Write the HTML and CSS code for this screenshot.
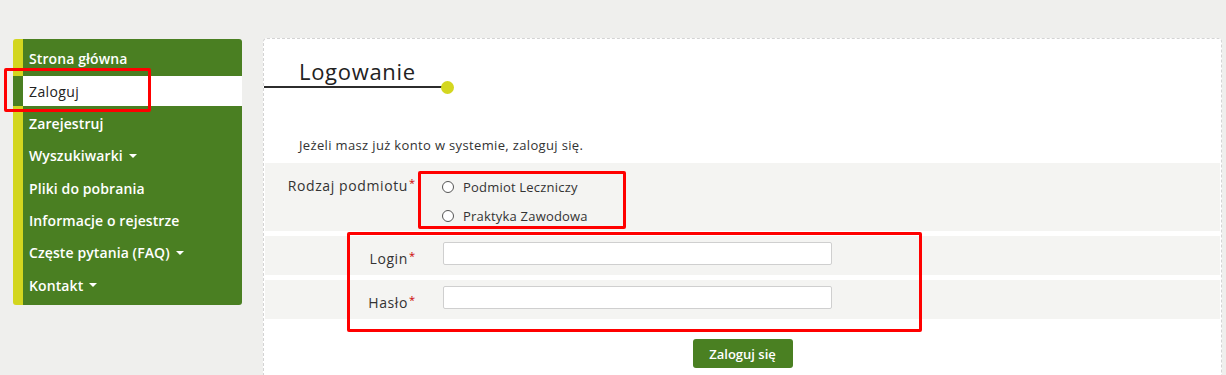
FILE: index.html
```html
<!DOCTYPE html>
<html lang="pl">
<head>
<meta charset="utf-8">
<title>Logowanie</title>
<link rel="stylesheet" href="styles.css">
</head>
<body>
<div class="page">
  <nav class="sidebar">
    <ul class="menu">
      <li><a href="#">Strona główna</a></li>
      <li class="active"><a href="#">Zaloguj</a></li>
      <li><a href="#">Zarejestruj</a></li>
      <li><a href="#">Wyszukiwarki <span class="caret"></span></a></li>
      <li><a href="#">Pliki do pobrania</a></li>
      <li><a href="#">Informacje o rejestrze</a></li>
      <li><a href="#">Częste pytania (FAQ) <span class="caret"></span></a></li>
      <li><a href="#">Kontakt <span class="caret"></span></a></li>
    </ul>
  </nav>
  <main class="panel">
    <div class="title"><h1>Logowanie</h1></div>
    <p class="intro">Jeżeli masz już konto w systemie, zaloguj się.</p>
    <form class="form">
      <div class="row row-radio">
        <div class="lbl">Rodzaj podmiotu<span class="req">*</span></div>
        <div class="radios">
          <label class="radio"><span class="circle"></span>Podmiot Leczniczy</label>
          <label class="radio"><span class="circle"></span>Praktyka Zawodowa</label>
        </div>
      </div>
      <div class="row row-input">
        <div class="lbl">Login<span class="req">*</span></div>
        <input class="field" type="text">
      </div>
      <div class="row row-input">
        <div class="lbl">Hasło<span class="req">*</span></div>
        <input class="field" type="password">
      </div>
      <div class="actions"><button type="button" class="btn">Zaloguj się</button></div>
    </form>
  </main>
  <div class="mark mark-menu"></div>
  <div class="mark mark-radio"></div>
  <div class="mark mark-login"></div>
</div>
</body>
</html>
```

FILE: styles.css
```css
* { box-sizing: border-box; }
html, body { margin: 0; padding: 0; }
body {
  background: #efefed;
  font-family: "Open Sans", "DejaVu Sans", sans-serif;
  color: #333;
  height: 375px;
  overflow: hidden;
}
.page {
  position: relative;
  display: flex;
  align-items: flex-start;
  gap: 21px;
  padding: 39px 4px 0 13px;
}
.sidebar {
  width: 229px;
  flex: none;
  background: #4a7f22;
  border-left: 10px solid #d3d61f;
  border-radius: 3px;
  padding: 3px 0 4px;
}
.menu { list-style: none; margin: 0; padding: 0; }
.menu li { padding: 1.2px 0; }
.menu a {
  display: flex;
  align-items: center;
  height: 30px;
  padding-left: 6px;
  padding-top: 1px;
  color: #fff;
  font-size: 14px;
  font-weight: 600;
  text-decoration: none;
  letter-spacing: 0.1px;
}
.menu li.active a {
  background: #fff;
  color: #222;
  font-weight: 400;
  letter-spacing: 0.4px;
  box-shadow: -10px 0 0 #4a7f22;
}
.caret {
  display: inline-block;
  width: 0; height: 0;
  margin-left: 6px;
  border-left: 4px solid transparent;
  border-right: 4px solid transparent;
  border-top: 4px solid #fff;
}
.panel {
  flex: 1;
  height: 340px;
  margin-top: -1px;
  background: #fff;
  border: 1px dashed #d4d4d4;
  border-bottom: none;
  border-radius: 4px 4px 0 0;
  padding: 0 1px;
}
.title {
  position: relative;
  width: 178px;
  margin-left: -1px;
  padding: 17px 0 0 35px;
  border-bottom: 2px solid #2c2c2c;
}
.title::after {
  content: "";
  position: absolute;
  right: -12px;
  bottom: -7.5px;
  width: 13px; height: 13px;
  border-radius: 50%;
  background: #d4d720;
}
.title h1 {
  margin: 0;
  font-size: 22px;
  font-weight: 400;
  line-height: 30px;
  color: #222;
  letter-spacing: 0.7px;
}
.intro {
  margin: 48px 0 0 34px;
  font-size: 13px;
  line-height: 18px;
  color: #333;
  letter-spacing: 0.35px;
}
.form { margin-top: 9px; }
.row {
  display: flex;
  background: #f4f4f2;
  margin-bottom: 5px;
}
.lbl {
  width: 150px;
  flex: none;
  text-align: right;
  font-size: 14px;
  color: #333;
  letter-spacing: 0.6px;
}
.req { color: #c00; font-size: 11px; vertical-align: 4px; margin-left: 1px; letter-spacing: 0; }
.row-radio { height: 68px; }
.row-radio .lbl { padding-top: 12px; }
.radios {
  margin-left: 27px;
  padding-top: 15px;
  display: flex;
  flex-direction: column;
  gap: 11px;
}
.radio {
  display: flex;
  align-items: center;
  font-size: 13px;
  line-height: 18px;
  color: #333;
  letter-spacing: 0.2px;
}
.circle {
  width: 12px; height: 12px;
  border: 1px solid #555;
  border-radius: 50%;
  background: #fff;
  margin-right: 9px;
}
.row-input { height: 39px; align-items: flex-start; }
.row-input .lbl { padding-top: 12px; }
.field {
  margin-left: 28px;
  margin-top: 6px;
  width: 389px;
  height: 23px;
  border: 1px solid #cfcfcf;
  border-radius: 2px;
  background: #fff;
  padding: 0 4px;
}
.actions {
  display: flex;
  justify-content: center;
  padding-top: 15px;
}
.btn {
  width: 100px;
  height: 29px;
  background: #4a8022;
  color: #fff;
  border: none;
  border-radius: 3px;
  font-family: "Open Sans", "DejaVu Sans", sans-serif;
  font-size: 13px;
  font-weight: 600;
}
.mark {
  position: absolute;
  border: 3px solid #f00;
  border-radius: 2px;
  pointer-events: none;
}
.mark-menu { left: 4px; top: 68px; width: 147px; height: 44px; }
.mark-radio { left: 418px; top: 171px; width: 208px; height: 58px; }
.mark-login { left: 347px; top: 232px; width: 575px; height: 100px; }
```
